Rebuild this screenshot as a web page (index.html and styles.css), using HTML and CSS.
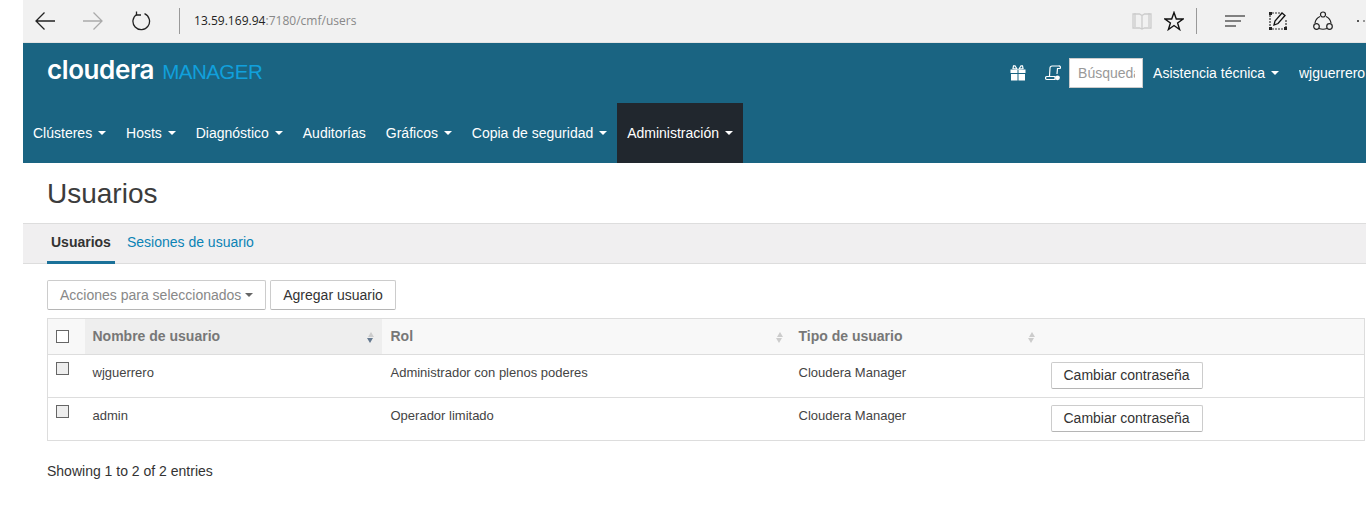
FILE: index.html
```html
<!DOCTYPE html>
<html lang="es">
<head>
    <meta charset="UTF-8">
    <title>Usuarios</title>
    <link rel="stylesheet" href="styles.css">
</head>
<body>
    <div class="browser-bar">
        <svg class="tool tool-back" width="22" height="20" viewBox="0 0 22 20"><path d="M21 10H2M10.500 1.500 2 10l8.500 8.500" fill="none" stroke="#222" stroke-width="1.300"/></svg>
        <svg class="tool tool-forward" width="22" height="20" viewBox="0 0 22 20"><path d="M1 10h19M11.500 1.500 20 10l-8.500 8.500" fill="none" stroke="#aaa" stroke-width="1.300"/></svg>
        <svg class="tool tool-reload" width="20" height="20" viewBox="0 0 20 20"><path d="M6 3.200A8.300 8.300 0 1 0 13.500 2.700" fill="none" stroke="#222" stroke-width="1.300"/><path d="M5.500 .5V4H10" fill="none" stroke="#222" stroke-width="1.300"/></svg>
        <span class="divider divider-url"></span>
        <div class="url">13.59.169.94<span>:7180/cmf/users</span></div>
        <svg class="tool tool-book" width="20" height="18" viewBox="0 0 20 18"><path d="M1 2h6.500L10 3.500 12.500 2H19v14h-6.500L10 17l-2.500-1H1zM10 3.500V17M3 1v14M17 1v14" fill="none" stroke="#ccc" stroke-width="1.300"/></svg>
        <svg class="tool tool-star" width="20" height="20" viewBox="0 0 20 20"><path d="M10 1.500 12.300 8H19l-5.400 4 2 6.500L10 14.500l-5.600 4 2-6.500L1 8h6.700z" fill="none" stroke="#111" stroke-width="1.400"/></svg>
        <span class="divider divider-tools"></span>
        <svg class="tool tool-hub" width="20" height="12" viewBox="0 0 20 12"><path d="M0 1h20M0 6h16M0 11h11" stroke="#111" stroke-width="1.200"/></svg>
        <svg class="tool tool-note" width="20" height="20" viewBox="0 0 20 20"><path d="M2 4v12M18 9v7M4 18h12M4 2h8" stroke="#333" stroke-width="1.200" stroke-dasharray="2 1" fill="none"/><path d="M1 1h3v3H1zM1 16h3v3H1zM16 16h3v3h-3z" fill="#222"/><path d="M6 14l1-4 7-8 3 2.500-7 8z" fill="none" stroke="#111" stroke-width="1.300"/></svg>
        <svg class="tool tool-share" width="20" height="20" viewBox="0 0 20 20"><path d="M7 5.500A8.500 8.500 0 0 0 2 12M13 5.500A8.500 8.500 0 0 1 18 12M6 17.500q4 1.500 8 0" fill="none" stroke="#222" stroke-width="1.200"/><circle cx="10" cy="3.500" r="2.500" fill="none" stroke="#222" stroke-width="1.200"/><circle cx="3.500" cy="15.500" r="2.800" fill="none" stroke="#222" stroke-width="1.200"/><circle cx="16.500" cy="15.500" r="2.800" fill="none" stroke="#222" stroke-width="1.200"/></svg>
        <svg class="tool tool-more" width="8" height="4" viewBox="0 0 8 4"><circle cx="1" cy="2" r="1" fill="#222"/><circle cx="7" cy="2" r="1" fill="#777"/></svg>
    </div>

    <div class="page">
        <header class="header">
            <div class="top-row">
                <div class="logo"><span class="logo-name">cloudera</span><span class="logo-product">MANAGER</span></div>
                <div class="top-actions">
                    <svg class="top-icon" width="16" height="16" viewBox="0 0 16 16"><path d="M.5 4.500h7V8h-7zM8.500 4.500h7V8h-7zM1 9h6.500v6.500H1zM8.500 9H15v6.500H8.500z" fill="#fff"/><path d="M7 4 5 .8H3.500L3 3.500zM9 4l2-3.200h1.500L13 3.500z" fill="none" stroke="#fff" stroke-width="1.200"/></svg>
                    <svg class="top-icon icon-scroll" width="16" height="16" viewBox="0 0 16 16"><path d="M4.500 11 5 3a2 2 0 0 1 2-2h6.500a1.500 1.500 0 0 1 1.500 2.500h-2.500L12 9M2 14.500a1.500 1.500 0 0 1 0-3h8v3z" fill="none" stroke="#fff" stroke-width="1.200"/><circle cx="12.500" cy="12.800" r="2.400" fill="#fff"/></svg>
                    <input class="search" type="text" placeholder="Búsqueda">
                    <a class="top-link">Asistencia técnica <i class="caret"></i></a>
                    <a class="top-link user-link">wjguerrero</a>
                </div>
            </div>
            <nav class="nav">
                <a>Clústeres <i class="caret"></i></a>
                <a>Hosts <i class="caret"></i></a>
                <a>Diagnóstico <i class="caret"></i></a>
                <a>Auditorías</a>
                <a>Gráficos <i class="caret"></i></a>
                <a>Copia de seguridad <i class="caret"></i></a>
                <a class="active">Administración <i class="caret"></i></a>
            </nav>
        </header>

        <h1 class="title">Usuarios</h1>

        <div class="tabs">
            <a class="tab tab-active">Usuarios</a>
            <a class="tab">Sesiones de usuario</a>
        </div>

        <div class="toolbar">
            <button class="btn btn-muted">Acciones para seleccionados <i class="caret caret-dark"></i></button>
            <button class="btn">Agregar usuario</button>
        </div>

        <table class="users">
            <thead>
                <tr>
                    <th class="col-check"><span class="check check-head"></span></th>
                    <th class="col-name sorted">Nombre de usuario<i class="sort sort-down"></i></th>
                    <th class="col-role">Rol<i class="sort"></i></th>
                    <th class="col-type">Tipo de usuario<i class="sort"></i></th>
                    <th></th>
                </tr>
            </thead>
            <tbody>
                <tr>
                    <td class="col-check"><span class="check"></span></td>
                    <td>wjguerrero</td>
                    <td class="col-role">Administrador con plenos poderes</td>
                    <td>Cloudera Manager</td>
                    <td class="col-action"><button class="btn btn-small">Cambiar contraseña</button></td>
                </tr>
                <tr>
                    <td class="col-check"><span class="check"></span></td>
                    <td>admin</td>
                    <td class="col-role">Operador limitado</td>
                    <td>Cloudera Manager</td>
                    <td class="col-action"><button class="btn btn-small">Cambiar contraseña</button></td>
                </tr>
            </tbody>
        </table>

        <p class="info">Showing 1 to 2 of 2 entries</p>
    </div>
</body>
</html>
```

FILE: styles.css
```css
* {
    box-sizing: border-box;
    padding: 0;
    margin: 0;
}

:root {
    --header-bg: #1a6482;
    --nav-active: #21272e;
    --text: #333;
    --border: #ddd;
    --link: #0b83b5;
    --logo-blue: #11a0dc;
}

html, body {
    height: 511px;
    overflow: hidden;
}

body {
    background-color: white;
    color: var(--text);
    font-family: "Liberation Sans", Arial, sans-serif;
    font-size: 14px;
    line-height: 20px;
}

/* browser toolbar */
.browser-bar {
    height: 43px;
    margin-left: 23px;
    background-color: #f1f1f1;
    border-bottom: 1px solid #e4e4e4;
    display: flex;
    align-items: center;
}

.tool {
    flex: none;
}

.tool-back {
    margin-left: 11px;
}

.tool-forward {
    margin-left: 26px;
}

.tool-reload {
    margin-left: 27px;
}

.divider {
    width: 1px;
    height: 26px;
    background-color: #999;
    flex: none;
}

.divider-url {
    margin-left: 28px;
}

.url {
    flex: none;
    margin-left: 14px;
    font-family: "Open Sans", sans-serif;
    font-size: 12px;
    letter-spacing: .02px;
    color: #222;
    width: 923px;
}

.url span {
    color: #888;
}

.tool-book {
    margin-left: 15px;
}

.tool-star {
    margin-left: 12px;
}

.divider-tools {
    margin-left: 12px;
}

.tool-hub {
    margin-left: 28px;
}

.tool-note {
    margin-left: 23px;
}

.tool-share {
    margin-left: 25px;
}

.tool-more {
    margin-left: 24px;
}

/* app */
.page {
    margin-left: 23px;
}

.header {
    background-color: var(--header-bg);
    color: white;
    height: 120px;
}

.top-row {
    height: 60px;
    display: flex;
    align-items: center;
    justify-content: space-between;
}

.logo {
    margin-left: 24px;
    margin-top: -5px;
    display: flex;
    align-items: baseline;
    white-space: nowrap;
}

.logo-name {
    font-family: Inter, sans-serif;
    font-size: 26px;
    font-weight: 600;
    letter-spacing: -.4px;
}

.logo-product {
    font-size: 20.500px;
    color: var(--logo-blue);
    margin-left: 8px;
    letter-spacing: -.5px;
}

.top-actions {
    display: flex;
    align-items: center;
    flex: none;
}

.top-icon {
    margin-right: 19px;
}

.icon-scroll {
    margin-right: 8px;
}

.search {
    width: 74px;
    height: 30px;
    padding: 0 7px 0 8px;
    border: 1px solid #ccc;
    font-family: "Liberation Sans", Arial, sans-serif;
    font-size: 14px;
    color: #999;
    margin-right: 10px;
}

.search::placeholder {
    color: #999;
    opacity: 1;
}

.top-link {
    white-space: nowrap;
}

.user-link {
    margin-left: 20px;
    width: 67px;
    overflow: hidden;
}

.caret {
    display: inline-block;
    vertical-align: middle;
    margin-left: 2px;
    margin-top: -2px;
    border-top: 4px solid white;
    border-left: 4px solid transparent;
    border-right: 4px solid transparent;
}

.caret-dark {
    border-top-color: #666;
    margin-left: 0;
}

.nav {
    display: flex;
    height: 60px;
}

.nav a {
    display: block;
    padding: 20px 10px;
    white-space: nowrap;
}

.nav a.active {
    background-color: var(--nav-active);
}

.title {
    font-size: 28px;
    font-weight: normal;
    line-height: 32px;
    color: #3c3c3c;
    padding: 15px 0 13px 24px;
    height: 60px;
}

.tabs {
    height: 41px;
    background-color: #f0eff0;
    border-top: 1px solid #ddd;
    border-bottom: 1px solid #ddd;
    padding-left: 24px;
    display: flex;
}

.tab {
    color: var(--link);
    padding: 8px 4px 0;
    height: 40px;
}

.tab-active {
    color: var(--text);
    font-weight: bold;
    border-bottom: 3px solid #1b7199;
    margin-right: 8px;
}

.toolbar {
    padding: 16px 0 8px 24px;
    display: flex;
    gap: 4px;
}

.btn {
    height: 30px;
    padding: 0 12px;
    background-color: white;
    border: 1px solid #ccc;
    border-bottom-color: #b5b5b5;
    border-radius: 2px;
    font-family: "Liberation Sans", Arial, sans-serif;
    font-size: 14px;
    color: var(--text);
    white-space: nowrap;
}

.btn-muted {
    color: #888;
}

.btn-small {
    height: 27px;
    padding-bottom: 2px;
}

.users {
    margin-left: 24px;
    width: 1318px;
    table-layout: fixed;
    border-collapse: collapse;
    border: 1px solid var(--border);
    font-size: 13px;
    color: #444;
}

.users th {
    height: 36px;
    background-color: #f8f8f8;
    border-bottom: 1px solid var(--border);
    text-align: left;
    color: #777;
    font-size: 14px;
    padding: 0 0 2px 8px;
    position: relative;
}

.users th.sorted {
    background-color: #eee;
}

.users td {
    height: 43px;
    border-bottom: 1px solid var(--border);
    padding: 8px 8px 0;
    vertical-align: top;
    line-height: 20px;
}

.users .col-check {
    width: 37px;
    padding: 0 0 0 8px;
}

.users td.col-check {
    padding-top: 7px;
}

.col-name {
    width: 297px;
}

.col-role {
    width: 409px;
}

.users .col-role {
    padding-left: 9px;
}

.col-type {
    width: 252px;
}

.users td.col-action {
    padding: 7px 0 0 8px;
}

.check {
    display: block;
    width: 13px;
    height: 13px;
    border: 1px solid #666;
    background-color: #eee;
}

.check-head {
    background-color: white;
}

.sort {
    position: absolute;
    right: 8px;
    top: 13px;
    border-left: 3.500px solid transparent;
    border-right: 3.500px solid transparent;
    border-bottom: 5px solid #ccc;
}

.sort::after {
    content: "";
    position: absolute;
    left: -3.500px;
    top: 6px;
    border-left: 3.500px solid transparent;
    border-right: 3.500px solid transparent;
    border-top: 5px solid #ccc;
}

.sort-down::after {
    border-top-color: #667a90;
}

.info {
    padding: 20px 0 0 24px;
}
```
